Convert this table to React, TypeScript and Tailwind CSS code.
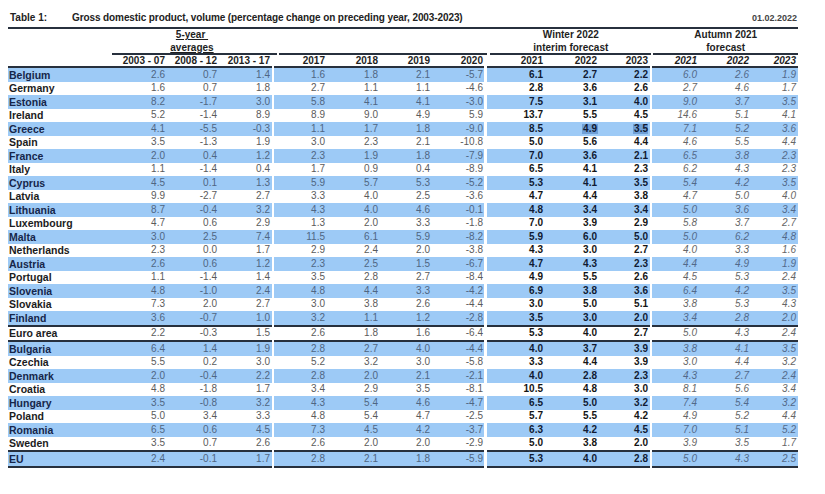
import React from "react"

type Row = [string, ...string[]]

const ROWS: Row[] = [
  ["Belgium", "2.6", "0.7", "1.4", "1.6", "1.8", "2.1", "-5.7", "6.1", "2.7", "2.2", "6.0", "2.6", "1.9"],
  ["Germany", "1.6", "0.7", "1.8", "2.7", "1.1", "1.1", "-4.6", "2.8", "3.6", "2.6", "2.7", "4.6", "1.7"],
  ["Estonia", "8.2", "-1.7", "3.0", "5.8", "4.1", "4.1", "-3.0", "7.5", "3.1", "4.0", "9.0", "3.7", "3.5"],
  ["Ireland", "5.2", "-1.4", "8.9", "8.9", "9.0", "4.9", "5.9", "13.7", "5.5", "4.5", "14.6", "5.1", "4.1"],
  ["Greece", "4.1", "-5.5", "-0.3", "1.1", "1.7", "1.8", "-9.0", "8.5", "4.9", "3.5", "7.1", "5.2", "3.6"],
  ["Spain", "3.5", "-1.3", "1.9", "3.0", "2.3", "2.1", "-10.8", "5.0", "5.6", "4.4", "4.6", "5.5", "4.4"],
  ["France", "2.0", "0.4", "1.2", "2.3", "1.9", "1.8", "-7.9", "7.0", "3.6", "2.1", "6.5", "3.8", "2.3"],
  ["Italy", "1.1", "-1.4", "0.4", "1.7", "0.9", "0.4", "-8.9", "6.5", "4.1", "2.3", "6.2", "4.3", "2.3"],
  ["Cyprus", "4.5", "0.1", "1.3", "5.9", "5.7", "5.3", "-5.2", "5.3", "4.1", "3.5", "5.4", "4.2", "3.5"],
  ["Latvia", "9.9", "-2.7", "2.7", "3.3", "4.0", "2.5", "-3.6", "4.7", "4.4", "3.8", "4.7", "5.0", "4.0"],
  ["Lithuania", "8.7", "-0.4", "3.2", "4.3", "4.0", "4.6", "-0.1", "4.8", "3.4", "3.4", "5.0", "3.6", "3.4"],
  ["Luxembourg", "4.7", "0.6", "2.9", "1.3", "2.0", "3.3", "-1.8", "7.0", "3.9", "2.9", "5.8", "3.7", "2.7"],
  ["Malta", "3.0", "2.5", "7.4", "11.5", "6.1", "5.9", "-8.2", "5.9", "6.0", "5.0", "5.0", "6.2", "4.8"],
  ["Netherlands", "2.3", "0.0", "1.7", "2.9", "2.4", "2.0", "-3.8", "4.3", "3.0", "2.7", "4.0", "3.3", "1.6"],
  ["Austria", "2.6", "0.6", "1.2", "2.3", "2.5", "1.5", "-6.7", "4.7", "4.3", "2.3", "4.4", "4.9", "1.9"],
  ["Portugal", "1.1", "-1.4", "1.4", "3.5", "2.8", "2.7", "-8.4", "4.9", "5.5", "2.6", "4.5", "5.3", "2.4"],
  ["Slovenia", "4.8", "-1.0", "2.4", "4.8", "4.4", "3.3", "-4.2", "6.9", "3.8", "3.6", "6.4", "4.2", "3.5"],
  ["Slovakia", "7.3", "2.0", "2.7", "3.0", "3.8", "2.6", "-4.4", "3.0", "5.0", "5.1", "3.8", "5.3", "4.3"],
  ["Finland", "3.6", "-0.7", "1.0", "3.2", "1.1", "1.2", "-2.8", "3.5", "3.0", "2.0", "3.4", "2.8", "2.0"],
  ["Euro area", "2.2", "-0.3", "1.5", "2.6", "1.8", "1.6", "-6.4", "5.3", "4.0", "2.7", "5.0", "4.3", "2.4"],
  ["Bulgaria", "6.4", "1.4", "1.9", "2.8", "2.7", "4.0", "-4.4", "4.0", "3.7", "3.9", "3.8", "4.1", "3.5"],
  ["Czechia", "5.5", "0.2", "3.0", "5.2", "3.2", "3.0", "-5.8", "3.3", "4.4", "3.9", "3.0", "4.4", "3.2"],
  ["Denmark", "2.0", "-0.4", "2.2", "2.8", "2.0", "2.1", "-2.1", "4.0", "2.8", "2.3", "4.3", "2.7", "2.4"],
  ["Croatia", "4.8", "-1.8", "1.7", "3.4", "2.9", "3.5", "-8.1", "10.5", "4.8", "3.0", "8.1", "5.6", "3.4"],
  ["Hungary", "3.5", "-0.8", "3.2", "4.3", "5.4", "4.6", "-4.7", "6.5", "5.0", "3.2", "7.4", "5.4", "3.2"],
  ["Poland", "5.0", "3.4", "3.3", "4.8", "5.4", "4.7", "-2.5", "5.7", "5.5", "4.2", "4.9", "5.2", "4.4"],
  ["Romania", "6.5", "0.6", "4.5", "7.3", "4.5", "4.2", "-3.7", "6.3", "4.2", "4.5", "7.0", "5.1", "5.2"],
  ["Sweden", "3.5", "0.7", "2.6", "2.6", "2.0", "2.0", "-2.9", "5.0", "3.8", "2.0", "3.9", "3.5", "1.7"],
  ["EU", "2.4", "-0.1", "1.7", "2.8", "2.1", "1.8", "-5.9", "5.3", "4.0", "2.8", "5.0", "4.3", "2.5"],
]

// rows that get a thick rule underneath
const RULE_BELOW = new Set(["Finland", "Euro area", "Sweden", "EU"])

const W_AVG = ["w-[52px]", "w-[52px]", "w-[53px]"]
const W_HIST = ["w-[52px]", "w-[53px]", "w-[52px]", "w-[53px]"]
const W_WIN = ["w-[58px]", "w-[54px]", "w-[51px]"]
const W_AUT = ["w-[47px]", "w-[52px]", "w-[47px]"]

const FONT = { fontFamily: '"Liberation Sans", Arial, sans-serif' }

function DataRow({ row, blue }: { row: Row; blue: boolean }) {
  const [name, ...v] = row
  const rule = RULE_BELOW.has(name)
  const bg = blue ? "bg-[#9dcaf6]" : "bg-white"
  const line = rule ? "border-b-2 border-[#27303d]" : ""
  const cell = `${bg} ${line} h-full flex items-center justify-end`
  const plain = blue ? "text-[#4f6683]" : "text-[#5b5b5b]"
  const greece = name === "Greece"

  return (
    <div className={`flex ${rule ? "h-[15.5px]" : "h-[13.5px]"} text-[10px] leading-none`}>
      <div
        className={`${bg} ${line} h-full w-[107px] flex items-center pl-[1px] font-bold text-[10.5px] ${blue ? "text-[#16264a]" : "text-[#1c1c1c]"}`}
      >
        {name}
      </div>
      {W_AVG.map((w, i) => (
        <div key={i} className={`${cell} ${w} pr-[2px] ${plain}`}>{v[i]}</div>
      ))}
      <div className="w-[2px] bg-white" />
      {W_HIST.map((w, i) => (
        <div key={i} className={`${cell} ${w} pr-[1px] ${plain}`}>{v[3 + i]}</div>
      ))}
      <div className="w-[3px] bg-white" />
      {W_WIN.map((w, i) => (
        <div key={i} className={`${cell} ${w} pr-[2px] font-bold ${blue ? "text-[#101a33]" : "text-[#151515]"}`}>
          {greece && i > 0 ? (
            <span className={i === 1 ? "bg-[#6f9fd6] px-[1px] -mr-[1px]" : "bg-[#6f9fd6] pl-[1px]"}>{v[7 + i]}</span>
          ) : (
            v[7 + i]
          )}
        </div>
      ))}
      <div className="w-[2px] bg-white" />
      {W_AUT.map((w, i) => (
        <div key={i} className={`${cell} ${w} pr-[2px] italic ${blue ? "text-[#52698a]" : "text-[#666666]"}`}>{v[10 + i]}</div>
      ))}
    </div>
  )
}

export default function App() {
  const years = ["2017", "2018", "2019", "2020"]
  const rule = "border-b-2 border-[#27303d]"
  return (
    <div className="w-[825px] h-[494px] bg-white pl-[8px] pt-[12px]" style={FONT}>
      <div className="w-[790px]">
        {/* Title */}
        <div className={`flex items-end h-[17px] pb-[2px] ${rule}`}>
          <span className="w-[64px] pl-[2px] text-[10px] font-bold text-[#222]">Table 1:</span>
          <span className="flex-1 text-[10px] font-bold text-[#222] tracking-[-0.1px]">
            Gross domestic product, volume (percentage change on preceding year, 2003-2023)
          </span>
          <span className="text-[9px] font-bold text-[#444] pr-[1px]">01.02.2022</span>
        </div>

        {/* Group headers */}
        <div className="flex h-[26px] text-[10px] font-bold text-[#1e1e1e] leading-[12.5px]">
          <div className="w-[105px]" />
          <div className={`w-[167px] flex ${rule}`}>
            <div className="w-[54px]" />
            <div className="w-[52px] flex flex-col items-center">
              <span className="underline whitespace-pre">5-year </span>
              <span className="underline">averages</span>
            </div>
          </div>
          <div className="w-[2px]" />
          <div className={`w-[210px] ${rule}`} />
          <div className="w-[3px]" />
          <div className={`w-[163px] flex flex-col items-center ${rule}`}>
            <span>Winter 2022</span>
            <span>interim forecast</span>
          </div>
          <div className="w-[2px]" />
          <div className={`w-[146px] flex flex-col items-center ${rule}`}>
            <span>Autumn 2021</span>
            <span>forecast</span>
          </div>
        </div>

        {/* Year header */}
        <div className="flex h-[13px] text-[10px] font-bold text-[#1e1e1e] leading-none">
          <div className={`w-[107px] ${rule}`} />
          {["2003 - 07", "2008 - 12", "2013 - 17"].map((t, i) => (
            <div key={t} className={`${W_AVG[i]} ${rule} flex items-center justify-end pr-[2px] whitespace-nowrap`}>{t}</div>
          ))}
          <div className="w-[2px]" />
          {years.map((t, i) => (
            <div key={t} className={`${W_HIST[i]} ${rule} flex items-center justify-end pr-[1px]`}>{t}</div>
          ))}
          <div className="w-[3px]" />
          {["2021", "2022", "2023"].map((t, i) => (
            <div key={t} className={`${W_WIN[i]} ${rule} flex items-center justify-end pr-[2px]`}>{t}</div>
          ))}
          <div className="w-[2px]" />
          {["2021", "2022", "2023"].map((t, i) => (
            <div key={t} className={`${W_AUT[i]} ${rule} flex items-center justify-end pr-[2px] italic`}>{t}</div>
          ))}
        </div>

        {/* Data */}
        {ROWS.map((r, i) => (
          <DataRow key={r[0]} row={r} blue={i % 2 === 0} />
        ))}
      </div>
    </div>
  )
}
